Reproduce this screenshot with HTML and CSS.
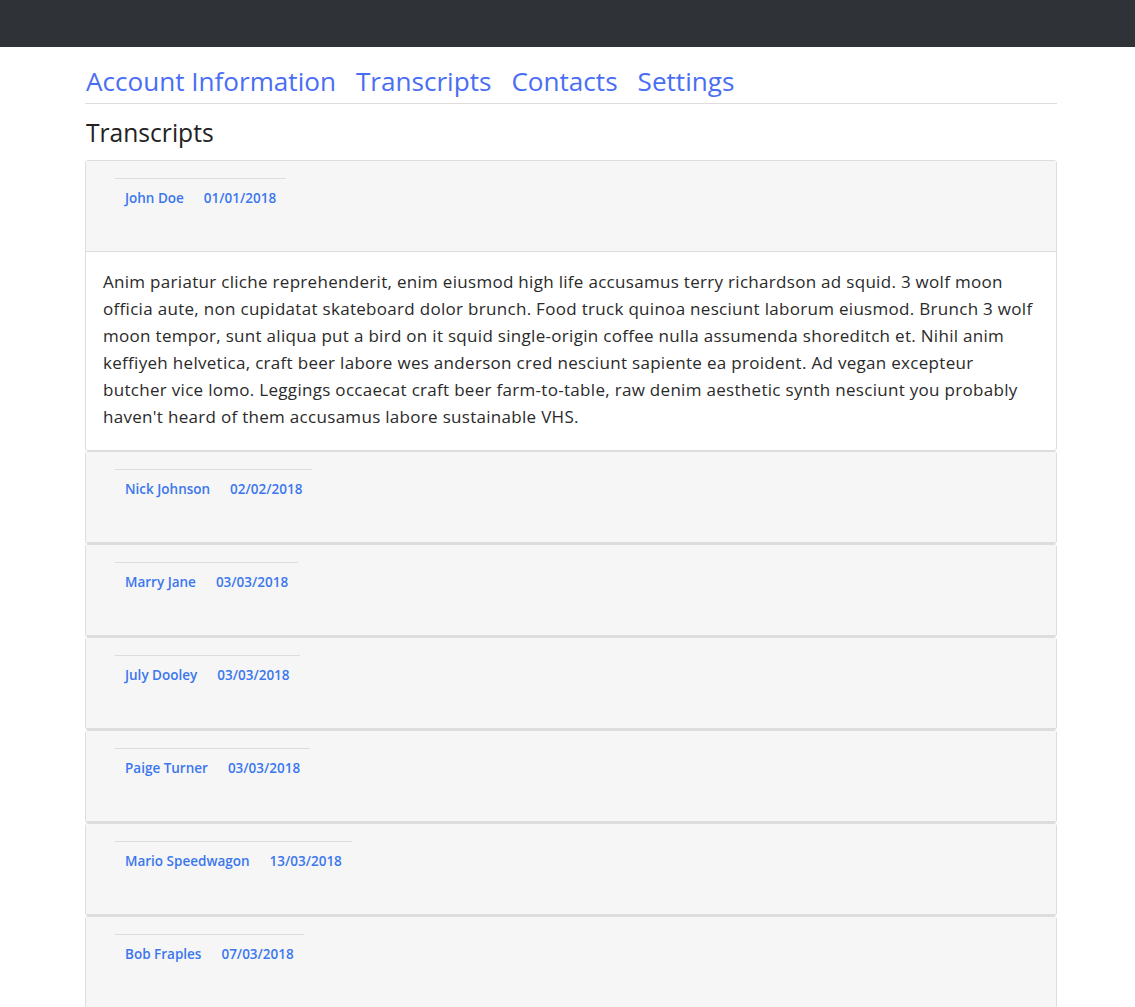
FILE: index.html
```html
<!DOCTYPE html>
<html lang="en">
<head>
<meta charset="utf-8">
<title>Transcripts</title>
<link rel="stylesheet" href="styles.css">
</head>
<body>
<header class="topbar"></header>
<main class="container">
  <nav class="tabs">
    <a href="#" class="tab">Account Information</a>
    <a href="#" class="tab">Transcripts</a>
    <a href="#" class="tab">Contacts</a>
    <a href="#" class="tab">Settings</a>
  </nav>
  <h2 class="title">Transcripts</h2>
  <div class="panels">
    <section class="panel">
      <div class="panel-heading">
        <table class="meta"><tr><td><a href="#">John Doe</a></td><td><a href="#">01/01/2018</a></td></tr></table>
      </div>
      <div class="panel-body">Anim pariatur cliche reprehenderit, enim eiusmod high life accusamus terry richardson ad squid. 3 wolf moon officia aute, non cupidatat skateboard dolor brunch. Food truck quinoa nesciunt laborum eiusmod. Brunch 3 wolf moon tempor, sunt aliqua put a bird on it squid single-origin coffee nulla assumenda shoreditch et. Nihil anim keffiyeh helvetica, craft beer labore wes anderson cred nesciunt sapiente ea proident. Ad vegan excepteur butcher vice lomo. Leggings occaecat craft beer farm-to-table, raw denim aesthetic synth nesciunt you probably haven't heard of them accusamus labore sustainable VHS.</div>
    </section>
    <section class="panel">
      <div class="panel-heading">
        <table class="meta"><tr><td><a href="#">Nick Johnson</a></td><td><a href="#">02/02/2018</a></td></tr></table>
      </div>
    </section>
    <section class="panel">
      <div class="panel-heading">
        <table class="meta"><tr><td><a href="#">Marry Jane</a></td><td><a href="#">03/03/2018</a></td></tr></table>
      </div>
    </section>
    <section class="panel">
      <div class="panel-heading">
        <table class="meta"><tr><td><a href="#">July Dooley</a></td><td><a href="#">03/03/2018</a></td></tr></table>
      </div>
    </section>
    <section class="panel">
      <div class="panel-heading">
        <table class="meta"><tr><td><a href="#">Paige Turner</a></td><td><a href="#">03/03/2018</a></td></tr></table>
      </div>
    </section>
    <section class="panel">
      <div class="panel-heading">
        <table class="meta"><tr><td><a href="#">Mario Speedwagon</a></td><td><a href="#">13/03/2018</a></td></tr></table>
      </div>
    </section>
    <section class="panel">
      <div class="panel-heading">
        <table class="meta"><tr><td><a href="#">Bob Fraples</a></td><td><a href="#">07/03/2018</a></td></tr></table>
      </div>
    </section>
  </div>
</main>
</body>
</html>
```
FILE: styles.css
```css
* { box-sizing: border-box; }
html, body { margin: 0; padding: 0; }
body {
  font-family: "Open Sans", "DejaVu Sans", sans-serif;
  color: #222;
  background: #fff;
}
.topbar {
  height: 47px;
  background: #2f3237;
}
.container {
  width: 972px;
  margin-left: 85px;
}
.tabs {
  display: flex;
  gap: 20px;
  padding-left: 1px;
  border-bottom: 1px solid #dddddd;
  height: 57px;
  align-items: center;
  padding-top: 12px;
}
.tab {
  font-size: 26.1px;
  color: #4a6ef3;
  text-decoration: none;
}
.title {
  font-size: 24.6px;
  font-weight: 400;
  margin: 14px 0 0 1px;
  height: 42px;
  line-height: 30px;
  color: #222;
}
.panel {
  border: 1px solid #dddddd;
  border-radius: 3px;
  background: #fff;
}
.panel-heading {
  background: #f6f6f6;
  border-bottom: 1px solid #dddddd;
  height: 91px;
  padding: 17px 29px 0;
}
.meta {
  border-collapse: collapse;
}
.meta td {
  border-top: 1px solid #dddddd;
  padding: 9px 10px 10px;
  font-size: 13.5px;
  line-height: 20px;
  white-space: nowrap;
}
.meta a {
  color: #3b77ee;
  text-decoration: none;
  font-weight: 600;
}
.panel-body {
  padding: 16px 17px 20px;
  font-size: 17px;
  letter-spacing: 0.3px;
  line-height: 27px;
  color: #2a2a2a;
}
```
